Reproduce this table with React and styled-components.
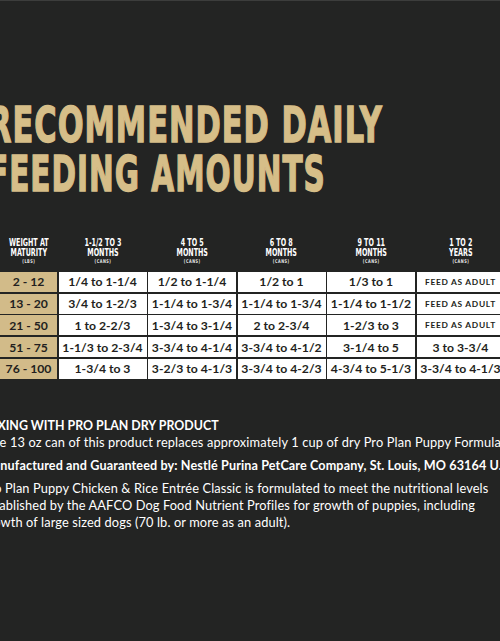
import React from 'react'
import styled, { createGlobalStyle } from 'styled-components'

const GlobalStyle = createGlobalStyle`
  html, body {
    margin: 0;
    padding: 0;
    background: #232423;
  }
  body {
    width: 500px;
    height: 641px;
    overflow: hidden;
  }
`

const heads = [
  ['WEIGHT AT', 'MATURITY', '(LBS)'],
  ['1-1/2 TO 3', 'MONTHS', '(CANS)'],
  ['4 TO 5', 'MONTHS', '(CANS)'],
  ['6 TO 8', 'MONTHS', '(CANS)'],
  ['9 TO 11', 'MONTHS', '(CANS)'],
  ['1 TO 2', 'YEARS', '(CANS)'],
]

const rows = [
  ['2 - 12', '1/4 to 1-1/4', '1/2 to 1-1/4', '1/2 to 1', '1/3 to 1', 'FEED AS ADULT'],
  ['13 - 20', '3/4 to 1-2/3', '1-1/4 to 1-3/4', '1-1/4 to 1-3/4', '1-1/4 to 1-1/2', 'FEED AS ADULT'],
  ['21 - 50', '1 to 2-2/3', '1-3/4 to 3-1/4', '2 to 2-3/4', '1-2/3 to 3', 'FEED AS ADULT'],
  ['51 - 75', '1-1/3 to 2-3/4', '3-3/4 to 4-1/4', '3-3/4 to 4-1/2', '3-1/4 to 5', '3 to 3-3/4'],
  ['76 - 100', '1-3/4 to 3', '3-2/3 to 4-1/3', '3-3/4 to 4-2/3', '4-3/4 to 5-1/3', '3-3/4 to 4-1/3'],
]

export default function App() {
  return (
    <Page>
      <GlobalStyle />
      <Title>
        <TitleLine $squeeze={0.69}>RECOMMENDED DAILY</TitleLine>
        <TitleLine $squeeze={0.67}>FEEDING AMOUNTS</TitleLine>
      </Title>

      <FeedTable>
        {heads.map((h, i) => (
          <HeadCell key={'h' + i}>
            <HeadText>
              <HeadLine>{h[0]}</HeadLine>
              <HeadLine>{h[1]}</HeadLine>
              <Unit>{h[2]}</Unit>
            </HeadText>
          </HeadCell>
        ))}
        {rows.map((r, i) =>
          r.map((c, j) => (
            <Cell key={i + '-' + j} $weight={j === 0} $small={c === 'FEED AS ADULT'}>
              {c}
            </Cell>
          ))
        )}
      </FeedTable>

      <Notes>
        <NoteHeading>MIXING WITH PRO PLAN DRY PRODUCT</NoteHeading>
        <NoteText>One 13 oz can of this product replaces approximately 1 cup of dry Pro Plan Puppy Formula.</NoteText>
        <Maker>Manufactured and Guaranteed by: Nestlé Purina PetCare Company, St. Louis, MO 63164 U.S.A.</Maker>
        <Statement>
          Pro Plan Puppy Chicken &amp; Rice Entrée Classic is formulated to meet the nutritional levels
          <br />
          established by the AAFCO Dog Food Nutrient Profiles for growth of puppies, including
          <br />
          growth of large sized dogs (70 lb. or more as an adult).
        </Statement>
      </Notes>
    </Page>
  )
}

const Page = styled.div`
  width: 500px;
  height: 641px;
  overflow: hidden;
  background: #232423;
  border-top: 1px solid #3c3d3c;
  box-sizing: border-box;
`

const Title = styled.h1`
  margin: 0 0 0 -12px;
  padding-top: 100px;
  font-family: "DejaVu Sans", sans-serif;
  font-stretch: condensed;
  font-weight: 700;
  font-size: 49px;
  line-height: 49px;
  color: #d6be88;
  letter-spacing: 1.5px;
  -webkit-text-stroke: 1.4px #d6be88;
`

const TitleLine = styled.span`
  display: block;
  white-space: nowrap;
  transform: scaleX(${(p) => p.$squeeze});
  transform-origin: left center;
`

const FeedTable = styled.div`
  display: grid;
  grid-template-columns: 57px repeat(5, 88px);
  grid-template-rows: auto repeat(5, 20px);
  column-gap: 1.5px;
  row-gap: 1.75px;
  margin-top: 39px;
  width: 520px;
`

const HeadCell = styled.div`
  padding-bottom: 3px;
  text-align: center;
  color: #ffffff;
  white-space: nowrap;
`

const HeadText = styled.div`
  display: inline-block;
  transform: scaleX(0.74);
  transform-origin: center;
  font-family: "DejaVu Sans", sans-serif;
  font-stretch: condensed;
  font-weight: 700;
`

const HeadLine = styled.div`
  font-size: 9.6px;
  line-height: 10px;
`

const Unit = styled.div`
  font-size: 5.2px;
  line-height: 6px;
  font-weight: 700;
  letter-spacing: 0.7px;
  color: #e8e8e8;
`

const Cell = styled.div`
  display: flex;
  align-items: center;
  justify-content: center;
  white-space: nowrap;
  background: ${(p) => (p.$weight ? '#d2bb89' : '#ffffff')};
  color: #231f20;
  font-family: Lato, "Liberation Sans", sans-serif;
  font-weight: 700;
  font-size: ${(p) => (p.$small ? '8.4px' : '12.2px')};
  letter-spacing: ${(p) => (p.$small ? '0.7px' : '0')};
`

const Notes = styled.div`
  margin: 38px 0 0 -18px;
  color: #ffffff;
  font-family: Lato, "Liberation Sans", sans-serif;
  font-size: 12.8px;
  white-space: nowrap;
`

const NoteHeading = styled.div`
  font-weight: 700;
  font-size: 12.4px;
  line-height: 17px;
`

const NoteText = styled.div`
  font-weight: 400;
  line-height: 17px;
  letter-spacing: 0.15px;
`

const Maker = styled.div`
  margin-top: 6px;
  font-weight: 700;
  font-size: 12.6px;
  line-height: 17px;
  letter-spacing: 0.12px;
`

const Statement = styled.p`
  margin: 6px 0 0;
  font-weight: 400;
  line-height: 17px;
  letter-spacing: 0.12px;
`
